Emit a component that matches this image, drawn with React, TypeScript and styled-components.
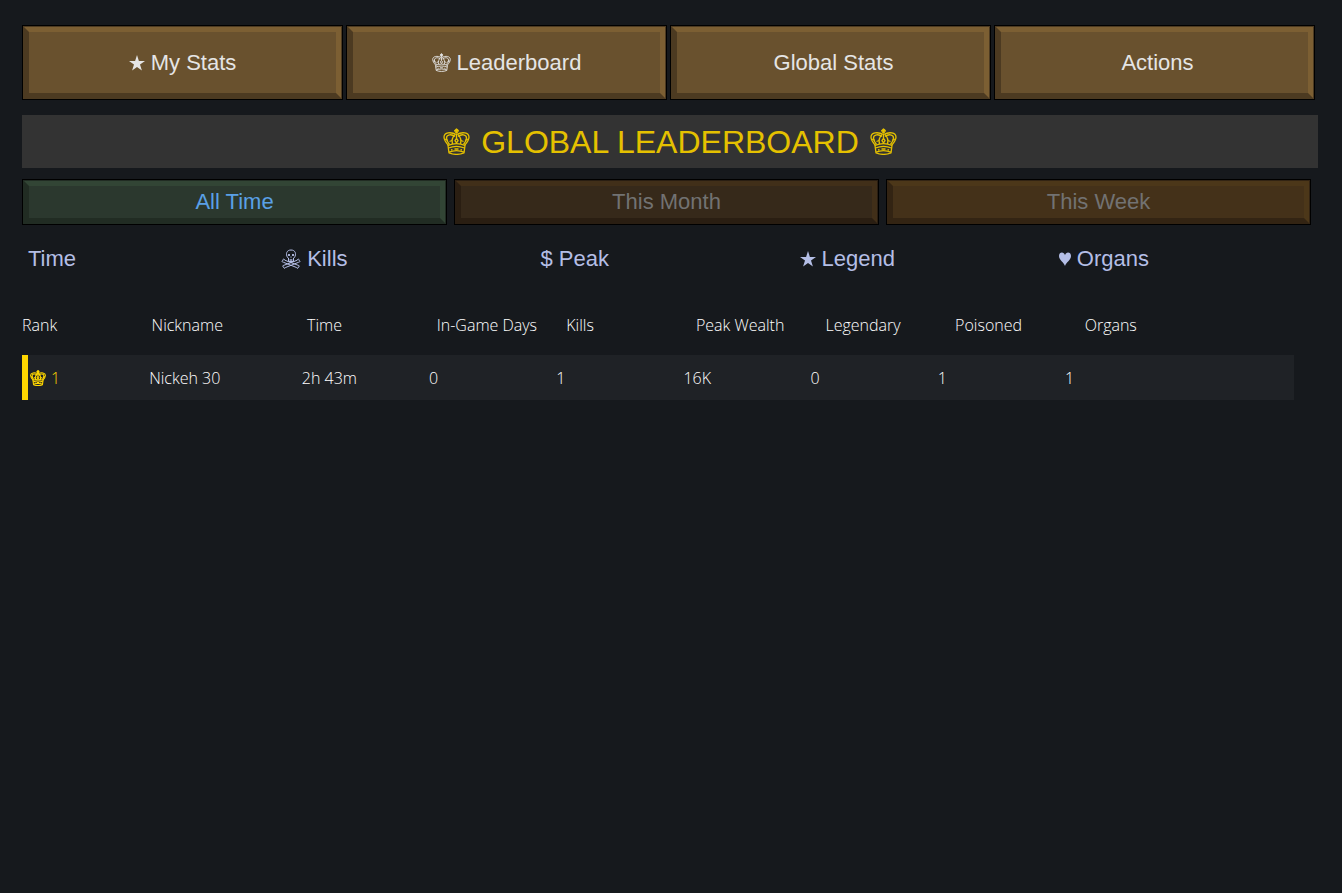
import React from "react";
import styled, { createGlobalStyle, css } from "styled-components";

const GlobalStyle = createGlobalStyle`
  * { box-sizing: border-box; }
  body {
    margin: 0;
    background: #16191d;
    color: #e5e5e5;
    font-family: "Liberation Sans", Arial, sans-serif;
  }
`;

interface Tone {
  face: string;
  light: string;
  dark: string;
  text: string;
}

const tones: Record<"bronze" | "green" | "dim" | "amber", Tone> = {
  bronze: { face: "#69512e", light: "#7c5f33", dark: "#4c3a21", text: "#e5e5e5" },
  green: { face: "#2b382e", light: "#324535", dark: "#212c23", text: "#5aa0e6" },
  dim: { face: "#36291a", light: "#412f19", dark: "#2a1e12", text: "#727272" },
  amber: { face: "#443119", light: "#4c3719", dark: "#332413", text: "#727272" },
};

const Page = styled.main`
  padding: 25px 24px 24px 22px;
`;

const Tabs = styled.nav`
  display: grid;
  grid-template-columns: repeat(4, 1fr);
  gap: 3px;
  padding-right: 3px;
`;

const Filters = styled.div`
  display: grid;
  grid-template-columns: repeat(3, 1fr);
  gap: 7px;
  padding-right: 7px;
  margin-top: 11px;
`;

const BevelButton = styled.button<{ $tone: Tone; $tall?: boolean; $indent?: boolean }>`
  display: flex;
  align-items: center;
  justify-content: center;
  gap: 6px;
  margin: 2px;
  height: ${(p) => (p.$tall ? 71 : 42)}px;
  padding: 0 0 0 ${(p) => (p.$indent ? 6 : 0)}px;
  font: 22px/24px "Liberation Sans", Arial, sans-serif;
  cursor: pointer;
  ${({ $tone }) => css`
    color: ${$tone.text};
    background: ${$tone.face};
    border: 5px solid;
    border-color: ${$tone.light} ${$tone.light} ${$tone.dark} ${$tone.dark};
    box-shadow: 0 0 0 1px ${$tone.dark}, 0 0 0 2px #000;
  `}
`;

const Title = styled.h1`
  display: flex;
  align-items: center;
  justify-content: center;
  gap: 11px;
  height: 53px;
  margin: 15px 0 0;
  background: #333;
  color: #e5c100;
  font-size: 32px;
  line-height: 36px;
  font-weight: 400;
`;

const SortBar = styled.div`
  display: grid;
  grid-template-columns: repeat(5, 1fr);
  margin-top: 22px;
`;

const SortButton = styled.button<{ $indent?: boolean }>`
  display: flex;
  align-items: center;
  gap: 6px;
  padding: 0 0 0 ${(p) => (p.$indent ? 6 : 0)}px;
  border: 0;
  background: none;
  color: #b4bee6;
  font: 22px/24px "Liberation Sans", Arial, sans-serif;
  cursor: pointer;
`;

const Board = styled.table`
  display: block;
  margin-top: 42px;
  color: #fff;
  font-family: "Open Sans", "Noto Sans", sans-serif;
  font-size: 16px;
  line-height: 24px;
  font-weight: 300;

  thead, tbody { display: block; }
`;

const rowColumns = css`
  display: grid;
  grid-template-columns: 10% 12% repeat(7, 10%);
  align-items: center;
`;

const HeadRow = styled.tr`
  ${rowColumns}
  height: 24px;
`;

const PlayerRow = styled.tr`
  ${rowColumns}
  height: 45px;
  margin: 18px 24px 0 0;
  background: #1f2226;
  box-shadow: inset 6px 0 #ffd700;
`;

const HeadCell = styled.th`
  padding: 0;
  font-weight: 300;
  text-align: left;
  white-space: nowrap;
`;

const Cell = styled.td`
  padding: 0;
  white-space: nowrap;
`;

const RankCell = styled(Cell)`
  display: flex;
  align-items: center;
  gap: 5px;
  padding-left: 8px;
  color: #ffd700;
`;

const Icon = styled.svg<{ $size: number }>`
  flex: none;
  width: ${(p) => p.$size}px;
  height: ${(p) => p.$size}px;
  fill: none;
  stroke: currentColor;
`;

const Crown = ({ size, weight = 1.3 }: { size: number; weight?: number }) => (
  <Icon $size={size} viewBox="0 0 27 27" strokeWidth={weight} strokeLinejoin="round" aria-hidden="true">
    <path d="M13.5 .6v5M11.300 2.700h4.400" />
    <circle cx="13.5" cy="3" r="1.500" />
    <path d="M5.500 17.500C2.500 14 .9 11.500 1 9C1.200 4.500 7.500 3.500 13.500 6.500C19.500 3.500 25.800 4.500 26 9c.1 2.500-1.500 5-4.500 8.500" />
    <path d="M6.500 16.500C4.500 14 3.500 12 3.500 10c0-4 5.500-4 8.500-1.500M20.500 16.500c2-2.500 3-4.500 3-6.500c0-4-5.500-4-8.500-1.500" />
    <path d="M9.500 16C8.500 12.500 9.500 9 12 6.500M17.500 16c1-3.500 0-7-2.500-9.500M13.500 6.500v3.500" />
    <path d="M13.500 10.500l1.600 2.200-1.600 2.200-1.600-2.200zM2 11l3 1.500M25 11l-3 1.500M6.500 13.500l2.500-1M20.500 13.500l-2.500-1" />
    <path d="M5 17.500c5.500-2.300 11.500-2.300 17 0l-1 7.300c-4.500 1.900-10.500 1.900-15 0z" />
    <path d="M5.500 20c5-2 11-2 16 0M6 24.200c4.500-2 10.500-2 15 0" />
    <path d="M11.500 21h4M8 22l1.500-.4M19 22l-1.500-.4" />
  </Icon>
);

const Skull = ({ size }: { size: number }) => (
  <Icon $size={size} viewBox="0 0 20 20" strokeWidth={1} strokeLinejoin="round" aria-hidden="true">
    <path d="M6.500 8.500C4.500 5 5.500 1 10 1s5.500 4 3.500 7.500L12.500 9v3.500h-5V9z" />
    <path d="M8 5v2M12 5v2" strokeWidth={1.800} />
    <path d="M10 7.500v1.200M9.200 10v2.500M10.800 10v2.500" />
    <path d="M7 12.500L3.500 11c0-1.500-2-1-1.500.5c-1.500.2-1 2 .5 1.800L15.500 18.500c.3 1.300 2 1 1.700-.4c1.600 0 1.300-2 0-1.800L7 12.500" />
    <path d="M13 12.500L16.500 11c0-1.500 2-1 1.500.5c1.500.2 1 2-.5 1.800L4.500 18.500c-.3 1.300-2 1-1.700-.4c-1.600 0-1.300-2 0-1.800L13 12.500" />
  </Icon>
);

const Star = ({ size }: { size: number }) => (
  <Icon $size={size} viewBox="0 0 16 16" aria-hidden="true">
    <path fill="currentColor" stroke="none" d="M8 0l1.900 5.900H16l-5 3.600 1.900 6L8 11.900l-4.900 3.600 1.900-6-5-3.600h6.100z" />
  </Icon>
);

const HeartIcon = styled(Icon)`
  width: 12px;
`;

const Heart = () => (
  <HeartIcon $size={14} viewBox="0 0 12 14" aria-hidden="true">
    <path fill="currentColor" stroke="none" d="M6 14C5 10.500 0 8 0 4C0-.2 5-.6 6 3.200C7-.6 12-.2 12 4C12 8 7 10.500 6 14z" />
  </HeartIcon>
);

const headings = [
  "Rank", "Nickname", "Time", "In-Game Days", "Kills",
  "Peak Wealth", "Legendary", "Poisoned", "Organs",
];

const players = [
  { rank: 1, stats: ["Nickeh 30", "2h 43m", "0", "1", "16K", "0", "1", "1"] },
];

export default function App() {
  return (
    <>
      <GlobalStyle />
      <Page>
        <Tabs>
          <BevelButton $tall $tone={tones.bronze}><Star size={16} />My Stats</BevelButton>
          <BevelButton $tall $tone={tones.bronze}><Crown size={19} />Leaderboard</BevelButton>
          <BevelButton $tall $indent $tone={tones.bronze}>Global Stats</BevelButton>
          <BevelButton $tall $indent $tone={tones.bronze}>Actions</BevelButton>
        </Tabs>
        <Title><Crown size={27} />GLOBAL LEADERBOARD<Crown size={27} /></Title>
        <Filters>
          <BevelButton $tone={tones.green}>All Time</BevelButton>
          <BevelButton $tone={tones.dim}>This Month</BevelButton>
          <BevelButton $tone={tones.amber}>This Week</BevelButton>
        </Filters>
        <SortBar>
          <SortButton $indent>Time</SortButton>
          <SortButton><Skull size={20} />Kills</SortButton>
          <SortButton>$ Peak</SortButton>
          <SortButton><Star size={16} />Legend</SortButton>
          <SortButton><Heart />Organs</SortButton>
        </SortBar>
        <Board>
          <thead>
            <HeadRow>
              {headings.map((h) => <HeadCell key={h} scope="col">{h}</HeadCell>)}
            </HeadRow>
          </thead>
          <tbody>
            {players.map((p) => (
              <PlayerRow key={p.rank}>
                <RankCell><Crown size={16} weight={1.8} />{p.rank}</RankCell>
                {p.stats.map((s, i) => <Cell key={i}>{s}</Cell>)}
              </PlayerRow>
            ))}
          </tbody>
        </Board>
      </Page>
    </>
  );
}
